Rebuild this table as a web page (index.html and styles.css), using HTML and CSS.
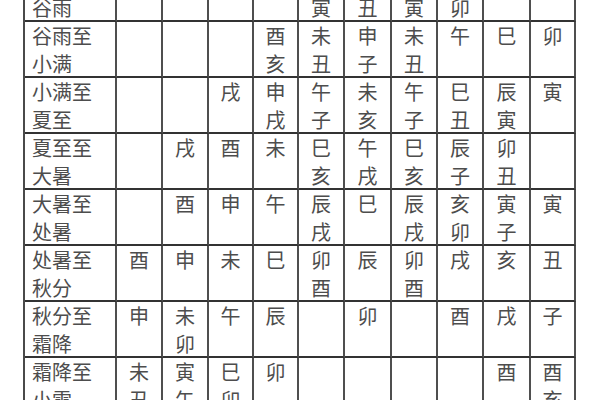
FILE: index.html
```html
<!DOCTYPE html>
<html lang="zh">
<head>
<meta charset="utf-8">
<title>节气表</title>
<link rel="stylesheet" href="styles.css">
</head>
<body>
<div class="sheet">
  <div class="tbl">
    <div class="c lab">清明至<br>谷雨</div><div class="c"></div><div class="c"></div><div class="c"></div><div class="c"></div><div class="c">申<br>寅</div><div class="c">未<br>丑</div><div class="c">申<br>寅</div><div class="c">酉<br>卯</div><div class="c"></div><div class="c"></div>

    <div class="c lab">谷雨至<br>小满</div><div class="c"></div><div class="c"></div><div class="c"></div><div class="c">酉<br>亥</div><div class="c">未<br>丑</div><div class="c">申<br>子</div><div class="c">未<br>丑</div><div class="c">午</div><div class="c">巳</div><div class="c">卯</div>

    <div class="c lab">小满至<br>夏至</div><div class="c"></div><div class="c"></div><div class="c">戌</div><div class="c">申<br>戌</div><div class="c">午<br>子</div><div class="c">未<br>亥</div><div class="c">午<br>子</div><div class="c">巳<br>丑</div><div class="c">辰<br>寅</div><div class="c">寅</div>

    <div class="c lab">夏至至<br>大暑</div><div class="c"></div><div class="c">戌</div><div class="c">酉</div><div class="c">未</div><div class="c">巳<br>亥</div><div class="c">午<br>戌</div><div class="c">巳<br>亥</div><div class="c">辰<br>子</div><div class="c">卯<br>丑</div><div class="c"></div>

    <div class="c lab">大暑至<br>处暑</div><div class="c"></div><div class="c">酉</div><div class="c">申</div><div class="c">午</div><div class="c">辰<br>戌</div><div class="c">巳</div><div class="c">辰<br>戌</div><div class="c">亥<br>卯</div><div class="c">寅<br>子</div><div class="c">寅</div>

    <div class="c lab">处暑至<br>秋分</div><div class="c">酉</div><div class="c">申</div><div class="c">未</div><div class="c">巳</div><div class="c">卯<br>酉</div><div class="c">辰</div><div class="c">卯<br>酉</div><div class="c">戌</div><div class="c">亥</div><div class="c">丑</div>

    <div class="c lab">秋分至<br>霜降</div><div class="c">申</div><div class="c">未<br>卯</div><div class="c">午</div><div class="c">辰</div><div class="c"></div><div class="c">卯</div><div class="c"></div><div class="c">酉</div><div class="c">戌</div><div class="c">子</div>

    <div class="c lab">霜降至<br>小雪</div><div class="c">未<br>丑</div><div class="c">寅<br>午</div><div class="c">巳<br>卯</div><div class="c">卯</div><div class="c"></div><div class="c"></div><div class="c"></div><div class="c"></div><div class="c">酉</div><div class="c">酉<br>亥</div>
  </div>
</div>
</body>
</html>
```

FILE: styles.css
```css
html, body {
  margin: 0;
  padding: 0;
  background: #ffffff;
  overflow: hidden;
}

.sheet {
  width: 600px;
  height: 400px;
  overflow: hidden;
}

.tbl {
  display: grid;
  grid-template-columns: 92px 46px 46px 45px 45px 46px 47px 46px 46px 47px 45px;
  grid-auto-rows: 56px;
  width: max-content;
  margin-left: 23px;
  margin-top: -36px;
  border-left: 2px solid #4a4a4a;
  border-top: 2px solid #3a3a3a;
  font-family: "Noto Sans CJK SC", "Noto Sans", sans-serif;
  font-size: 20px;
  line-height: 28px;
  color: #4d4d4d;
}

.c {
  box-sizing: border-box;
  border-right: 2px solid #4f4f4f;
  border-bottom: 2px solid #333333;
  text-align: center;
  overflow: hidden;
}

.lab {
  text-align: left;
  padding-left: 7px;
}
```
